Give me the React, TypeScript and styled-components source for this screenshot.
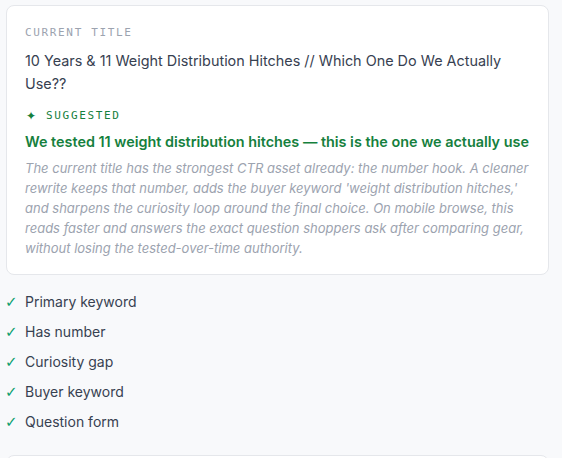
import React from "react";
import styled, { createGlobalStyle } from "styled-components";

const checks = [
  "Primary keyword",
  "Has number",
  "Curiosity gap",
  "Buyer keyword",
  "Question form",
];

const App: React.FC = () => {
  return (
    <>
      <GlobalStyle />
      <Page>
        <Card>
          <Label>CURRENT TITLE</Label>
          <CurrentTitle>
            10 Years &amp; 11 Weight Distribution Hitches // Which One Do We Actually Use??
          </CurrentTitle>
          <Label tone="green" spaced>
            <Spark>✦</Spark>SUGGESTED
          </Label>
          <SuggestedTitle>
            We tested 11 weight distribution hitches — this is the one we actually use
          </SuggestedTitle>
          <Reason>
            The current title has the strongest CTR asset already: the number hook. A cleaner
            rewrite keeps that number, adds the buyer keyword 'weight distribution hitches,'
            and sharpens the curiosity loop around the final choice. On mobile browse, this
            reads faster and answers the exact question shoppers ask after comparing gear,
            without losing the tested-over-time authority.
          </Reason>
        </Card>
        <CheckList>
          {checks.map((c) => (
            <CheckItem key={c}>
              <Tick>✓</Tick>
              {c}
            </CheckItem>
          ))}
        </CheckList>
        <NextCard />
      </Page>
    </>
  );
};

export default App;

const GlobalStyle = createGlobalStyle`
  html, body {
    margin: 0;
    padding: 0;
    background: #f8f9fb;
    font-family: Inter, "Noto Sans", sans-serif;
  }
`;

const Page = styled.div`
  padding: 5px 13px 0 6px;
  height: 458px;
  box-sizing: border-box;
  overflow: hidden;
`;

const Card = styled.div`
  background: #ffffff;
  border: 1px solid #e5e7eb;
  border-radius: 8px;
  padding: 19px 18px 16px;
`;

const Label = styled.div<{ tone?: "green"; spaced?: boolean }>`
  font-family: "DejaVu Sans Mono", "Liberation Mono", monospace;
  font-size: 11px;
  line-height: 16px;
  letter-spacing: 0.15em;
  color: ${(p) => (p.tone === "green" ? "#15803d" : "#9ca3af")};
  margin-top: ${(p) => (p.spaced ? "13px" : "0")};
  display: flex;
  align-items: center;
`;

const Spark = styled.span`
  font-family: "DejaVu Sans", sans-serif;
  font-size: 12px;
  margin: 0 10px 0 1px;
  letter-spacing: 0;
`;

const CurrentTitle = styled.div`
  margin-top: 8px;
  font-size: 14.4px;
  line-height: 23px;
  color: #374151;
`;

const SuggestedTitle = styled.div`
  margin-top: 7px;
  font-size: 14.4px;
  line-height: 22px;
  font-weight: 600;
  color: #15803d;
`;

const Reason = styled.p`
  margin: 5px 0 0;
  font-size: 13px;
  line-height: 20px;
  font-style: italic;
  color: #9ca3af;
`;

const CheckList = styled.ul`
  list-style: none;
  margin: 17px 0 0;
  padding: 0;
  display: flex;
  flex-direction: column;
  gap: 10px;
`;

const CheckItem = styled.li`
  display: flex;
  align-items: center;
  font-size: 14px;
  line-height: 20px;
  color: #374151;
`;

const Tick = styled.span`
  width: 20px;
  margin-left: -1px;
  font-family: "DejaVu Sans", sans-serif;
  color: #0f9f6e;
  font-size: 15px;
`;

const NextCard = styled.div`
  margin-top: 23px;
  height: 40px;
  background: #ffffff;
  border: 1px solid #e5e7eb;
  border-radius: 8px;
`;
